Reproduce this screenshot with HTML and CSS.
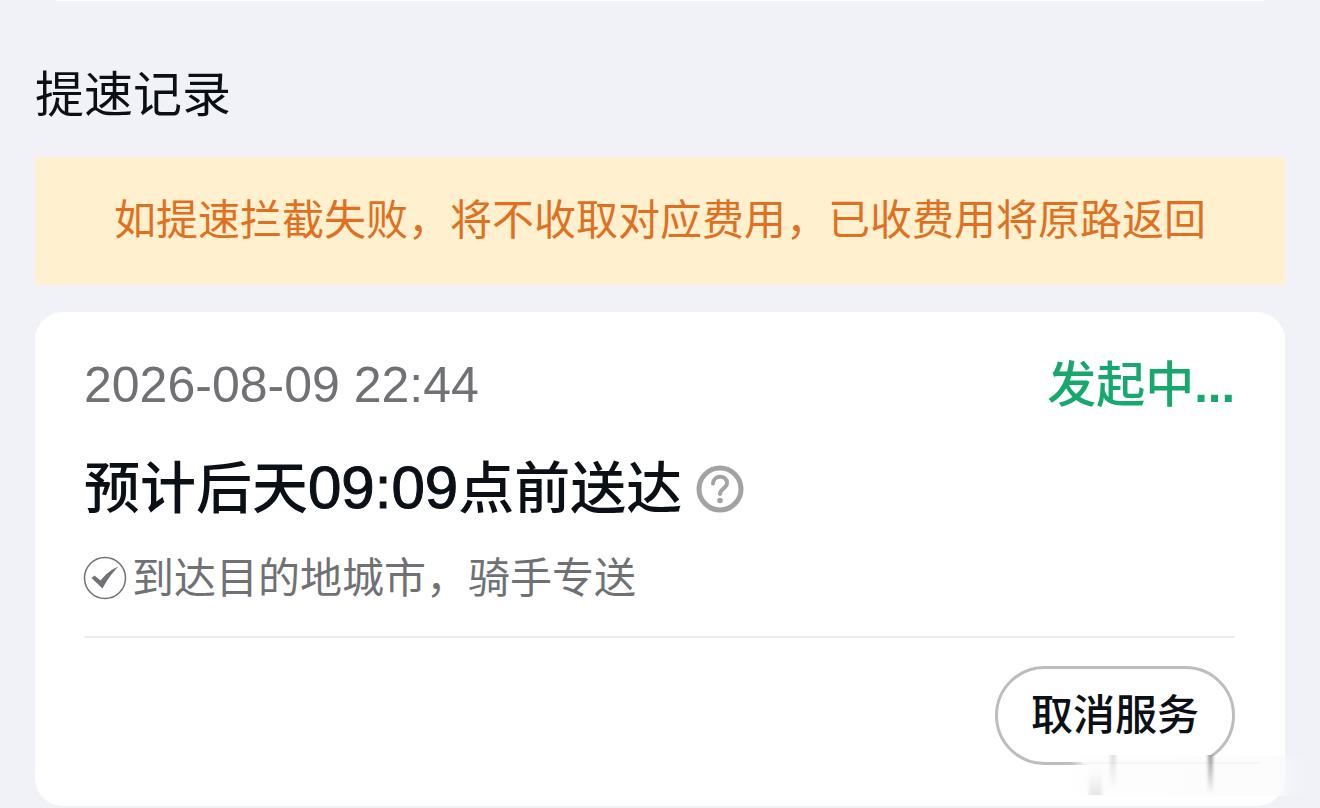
FILE: index.html
```
<!DOCTYPE html>
<html lang="zh-CN">
<head>
<meta charset="utf-8">
<meta name="viewport" content="width=device-width, initial-scale=1">
<title>提速记录</title>
<link rel="stylesheet" href="styles.css">
</head>
<body>
<div class="prev-card"></div>
<main class="page">
	<h1 class="page-title">提速记录</h1>
	<p class="notice">如提速拦截失败，将不收取对应费用，已收费用将原路返回</p>
	<section class="card">
		<div class="card-head">
			<time class="date" datetime="2026-08-09T22:44">2026-08-09 22:44</time>
			<span class="status">发起中<b>...</b></span>
		</div>
		<div class="eta">
			<h2 class="eta-text">预计后天<span class="eta-time">09:09</span>点前送达</h2>
			<button type="button" class="help" aria-label="时效说明">
				<svg viewBox="0 0 48 48" width="48" height="48" fill="none" stroke="#a3a3a3">
					<circle cx="24" cy="24" r="21" stroke-width="5"/>
					<path d="M17 18.500C17.500 9.500 31 9.500 31 18C31 23.500 24 23.500 24 29" stroke-width="4" stroke-linecap="round"/>
					<circle cx="24" cy="35.500" r="2.800" fill="#a3a3a3" stroke="none"/>
				</svg>
			</button>
		</div>
		<div class="desc">
			<svg class="tick" viewBox="0 0 44 44" width="44" height="44">
				<circle cx="22" cy="22" r="20.500" fill="none" stroke="#707174" stroke-width="1.500"/>
				<path d="M8.500 22L11.500 19.500L17.500 24.500C23 18 28 13.500 35.500 10.500C28.500 17.500 24.500 23.500 19.500 32.500Z" fill="#707174"/>
			</svg>
			<span>到达目的地城市，骑手专送</span>
		</div>
		<div class="card-foot">
			<button type="button" class="cancel">取消服务</button>
			<svg class="smudge" viewBox="0 0 240 48" width="240" height="48" aria-hidden="true">
				<defs>
					<linearGradient id="fade" x1="0" x2="1" y1="0" y2="0">
						<stop offset="0" stop-color="#fdfdfe" stop-opacity="0"/>
						<stop offset="0.080" stop-color="#fdfdfe"/>
						<stop offset="0.860" stop-color="#fcfcfd"/>
						<stop offset="0.920" stop-color="#f5f6fa" stop-opacity="0.400"/>
						<stop offset="1" stop-color="#f5f6fa" stop-opacity="0"/>
					</linearGradient>
					<linearGradient id="streak" x1="0" x2="0" y1="0" y2="1">
						<stop offset="0" stop-color="#9c9c9c"/>
						<stop offset="1" stop-color="#9c9c9c" stop-opacity="0"/>
					</linearGradient>
					<linearGradient id="block" x1="0" x2="0" y1="0" y2="1">
						<stop offset="0" stop-color="#f0f0f0" stop-opacity="0"/>
						<stop offset="1" stop-color="#e6e6e6"/>
					</linearGradient>
					<filter id="soft"><feGaussianBlur stdDeviation="1.500 0.500"/></filter>
				</defs>
				<rect x="0" y="1" width="240" height="40" fill="url(#fade)"/>
				<path d="M12 8H190" stroke="#f5f5f6" stroke-width="2"/>
				<g filter="url(#soft)">
					<rect x="19" y="12" width="13" height="28" fill="url(#block)"/>
					<rect x="40" y="0" width="6" height="34" fill="url(#streak)" opacity="0.300"/>
					<rect x="138" y="0" width="5" height="39" fill="url(#streak)"/>
				</g>
			</svg>
		</div>
	</section>
</main>
</body>
</html>
```
FILE: styles.css
```
*{box-sizing:border-box;}
body{margin:0;background:#f1f2f7;color:#0b0f16;font-family:"Liberation Sans","Noto Sans CJK SC",sans-serif;}
h1,h2,p{margin:0;font-weight:400;}
button{padding:0;border:0;background:none;font-family:inherit;color:inherit;cursor:pointer;}
svg{display:block;}

/* 上一张卡片的底边 */
.prev-card{height:1px;margin:0 56px;background:#fff;}

.page{padding:58px 35px 0;}
.page-title{font-size:49px;line-height:72px;}
.notice{margin-top:26px;padding:32px 24px;background:#fff0d0;color:#e07020;font-size:42px;line-height:64px;text-align:center;}

.card{margin-top:27px;padding:37px 50px 41px 49px;border-radius:28px;background:#fff;}
.card-head{display:flex;justify-content:space-between;align-items:center;line-height:72px;}
.date{font-size:50px;color:#707174;}
.status{font-size:49px;font-weight:500;color:#16a86c;}
.status b{font-weight:700;}
.eta{display:flex;align-items:center;gap:14px;margin-top:28px;}
.eta-text{font-size:56px;font-weight:500;line-height:80px;}
.eta-time{font-size:60px;line-height:1;-webkit-text-stroke:1px #0b0f16;}
.help{width:48px;height:48px;}
.desc{display:flex;align-items:center;gap:5px;margin-top:16px;color:#707174;font-size:42px;line-height:64px;}
.desc span{padding-top:2px;}
.tick{flex:none;margin-left:-1px;}
.card-foot{position:relative;display:flex;justify-content:flex-end;margin-top:25px;padding-top:28px;border-top:2px solid #ebebed;}
.cancel{height:99px;padding:0 33px 8px;border:3px solid #bdbdbd;border-radius:50px;font-size:42px;font-weight:500;}
.smudge{position:absolute;right:-75px;bottom:-38px;}
```
